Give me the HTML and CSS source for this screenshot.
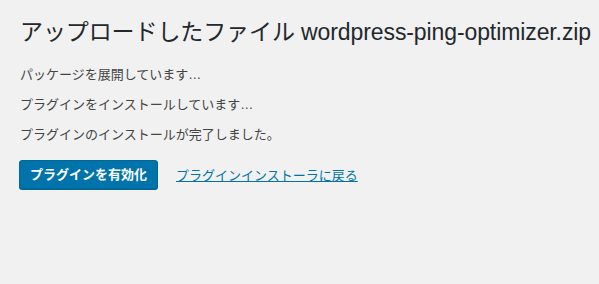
FILE: index.html
```html
<!DOCTYPE html>
<html lang="ja">
<head>
<meta charset="utf-8">
<link rel="stylesheet" href="styles.css">
</head>
<body>
<div class="wrap">
  <h1 class="title">アップロードしたファイル wordpress-ping-optimizer.zip</h1>
  <p class="msg">パッケージを展開しています…</p>
  <p class="msg">プラグインをインストールしています…</p>
  <p class="msg">プラグインのインストールが完了しました。</p>
  <div class="actions">
    <a class="button" href="#">プラグインを有効化</a>
    <a class="link" href="#">プラグインインストーラに戻る</a>
  </div>
</div>
</body>
</html>
```

FILE: styles.css
```css
html, body {
  margin: 0;
  padding: 0;
  background: #f1f1f1;
}
body {
  width: 599px;
  height: 284px;
  overflow: hidden;
  font-family: "Liberation Sans", "Noto Sans CJK JP", sans-serif;
  color: #23282d;
  font-size: 13px;
}
.wrap {
  padding: 17px 0 0 20px;
}
.title {
  margin: 0;
  font-size: 23px;
  font-weight: 400;
  line-height: 30px;
  color: #23282d;
  white-space: nowrap;
  letter-spacing: -0.1px;
}
.msg {
  margin: 0;
  line-height: 18px;
  padding: 6px 0;
  color: #444;
}
.title + .msg {
  margin-top: 13px;
}
.actions {
  display: flex;
  align-items: center;
  gap: 18px;
  margin-top: 10px;
  margin-left: -1px;
}
.button {
  display: inline-block;
  box-sizing: border-box;
  height: 29px;
  line-height: 27px;
  padding: 0 10px;
  background: #0073aa;
  border: 1px solid #006799;
  border-radius: 3px;
  box-shadow: 0 1px 0 #006799;
  color: #fff;
  font-weight: 700;
  text-decoration: none;
  font-size: 13px;
}
.link {
  color: #0073aa;
  text-decoration: underline;
  font-size: 13px;
  font-weight: 400;
}
```
